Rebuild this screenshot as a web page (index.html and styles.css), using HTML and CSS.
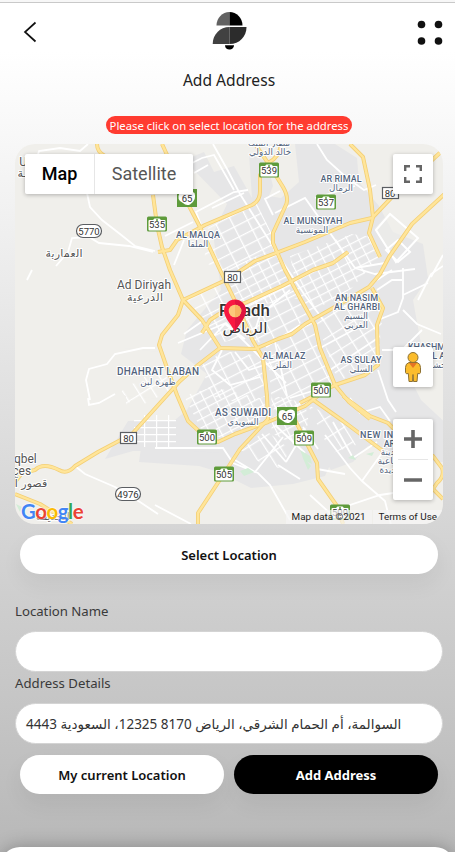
FILE: index.html
```html
<!DOCTYPE html>
<html lang="en">
<head>
<meta charset="utf-8">
<title>Add Address</title>
<link rel="stylesheet" href="styles.css">
</head>
<body>
<div class="screen">
  <header class="topbar">
    <svg class="back" viewBox="0 0 14 22"><path d="M12.500 1.500 2 11l10.500 9.500" fill="none" stroke="#111" stroke-width="1.700"/></svg>
    <svg class="logo" viewBox="0 0 36 40">
      <path d="M4.500 14.500A13 13.500 0 0 1 17.500 1v13.500z" fill="#626262"/><path d="M17.500 1a13 13.500 0 0 1 13 13.500h-13z" fill="#000"/>
      <path d="M17.500 16v17H.7C.7 23.500 8 16 17.500 16z" fill="#414141"/><path d="M17.500 16h17c0 9.500-7 17-17 17z" fill="#2c2c2c"/>
      <path d="M13 34.300h9c0 5.500-9 6-9 0z" fill="#000"/>
    </svg>
    <svg class="dots" viewBox="0 0 26 26"><g fill="#111"><circle cx="4.500" cy="4.500" r="3.800"/><circle cx="21.500" cy="4.500" r="3.800"/><circle cx="4.500" cy="21" r="3.800"/><circle cx="21.500" cy="21" r="3.800"/></g></svg>
  </header>
  <h1 class="title">Add Address</h1>
  <p class="notice">Please click on select location for the address</p>

  <section class="map">
    <svg class="map-art" viewBox="15 144 428 380">
      <defs>
        <pattern id="g1" width="15" height="11" patternUnits="userSpaceOnUse" patternTransform="rotate(-27)"><path d="M0 0H15M0 0V11" stroke="#fff" stroke-width="2.600"/></pattern>
        <pattern id="g2" width="10" height="8" patternUnits="userSpaceOnUse" patternTransform="rotate(-27)"><path d="M0 0H10M0 0V8" stroke="#fff" stroke-width="2.400"/></pattern>
        <pattern id="g3" width="13" height="17" patternUnits="userSpaceOnUse" patternTransform="rotate(-32)"><path d="M0 0H13M0 0V17" stroke="#fff" stroke-width="2.600"/></pattern>
        <pattern id="g4" width="12" height="7" patternUnits="userSpaceOnUse"><path d="M0 0H12M0 0V7" stroke="#fff" stroke-width="2.400"/></pattern>
        <g id="green"><rect x="-10" y="-7.500" width="20" height="15" rx="1.500" fill="#5e9b3b"/><rect x="-8.500" y="-4" width="17" height="10.500" rx="1" fill="#fff"/><path d="M-8-4h4l1.500-1.500h5L4-4h4" fill="#fff"/><circle cy="-4" r="1" fill="#5e9b3b"/></g>
        <g id="shield"><rect x="-10" y="-9" width="20" height="18" fill="#5e9b3b"/><path d="M-7.500-5 Q-4-7-1-4.500 3-8 7.500-5 10 2 3 6.500-1 8-4 5-11 2-7.500-5z" fill="#fff"/></g>
      </defs>
      <path d="M15 144h428v380H15z" fill="#f0efeb"/>
      <g fill="#e6e6e7">
        <path d="M184 160l20-8 10 20 20-6 18 32-3-44 18 8 6 24-4 10 12 2 18-16-4-38h40l22 14 2 24 20 24 14 26 30 12 5 34-15 22 8 44-8 40 8 16 28 26 26 40-50-6-30 10-20-30-40 14-10 22-32 8-42 4-32-16-20-6-60-4 2-14 46-38 20-36-26-20 6-24 34-40-8-56 14-30z"/>
        <path d="M128 421h45l24 24h24l20-18 52 2 20 30-62 12-32-18-26-2h-60l-28 8z"/>
        <path d="M320 399l40-3 38 30 10 28-40-8-15 16-22 8-22-36z"/>
      </g>
      <g fill="#f0efeb"><path d="M374 229l15-17 20 14-20 26zM125 348l34 4 10 22 12 22-6 4-50-4z" opacity=".5"/></g>
      <g>
        <path d="M208 228l48-26 15 30 3 18-50 22-20-10z" fill="url(#g1)"/>
        <path d="M224 270l52-22 24 50-60 10zM290 256l62-22 20 3 7 20-28 32-43 25-10-18z" fill="url(#g2)"/>
        <path d="M186 298l38-18 14 28 2 30-20 5-20-28zM240 302l54-22 14 38-25 18-30 8z" fill="url(#g1)"/>
        <path d="M316 320l61-32 6 22-5 50-40 22z" fill="url(#g3)"/>
        <path d="M202 365l22-14 36 5 6 40-22 8-34-8zM268 350l44-28 10 28 10 34-24 20-36 6z" fill="url(#g1)"/>
        <path d="M184 396l28-9 52 12 2 18-42 22-22-8zM275 396l30 7 4 20-14 22-24-12z" fill="url(#g2)"/>
        <path d="M134 415h38v32h-38zM156 415h20v33h-20z" fill="url(#g4)"/>
        <path d="M120 392l36-22 10 3 4 18-30 15zM126 385l24-5-24 26zM241 450l24-20 26 20-12 18-18-5zM308 405l34 16 14 24-24 8-10-18z" fill="url(#g3)"/>
        <path d="M376 230l14-16 28 24-22 24z" fill="none" stroke="#fff" stroke-width="2"/>
        <path d="M386 250l12-10 12 12-12 10z" fill="none" stroke="#fff" stroke-width="2"/>
      </g>
      <g fill="none" stroke="#fff" stroke-width="1.800">
        <path d="M37 158l2-7 21-3 20 3 8-7M87 193l3 14 12 13 18 14 15 12 20 5M56 266l12-14 4-14 17-1 10 6 30 3 24 6M27 280l5-10"/>
        <path d="M90 400l-4-20 3-11 18-5 8-10 28-6h12M88 398l1 7 10-2 16-9M75 466l10 8 30 13 25 15 18 12M155 505l36 19"/>
        <path d="M213 144l14 25 13 25 44 70 20 30 20 27M188 165l14-7 12-3 20 35M194 173l14-8M212 208l32-15M202 228l-6-16 38-20 14-2M165 236l28-14M184 240l-10 25"/>
        <path d="M317 144l10 16 20 18 17 12 12-5M280 191l-15 8 8 16M275 213l30-15 50 70 20 6 40-5M315 198l40-12M355 268l30-5"/>
        <path d="M184 334l20-14M178 343l48-20 60 60M200 350l25-26 20 15M222 350l-10 20 18 15 30-8M235 352l14 18 36-12M275 342l12 54M290 290l-30 25-8 25M300 325l-34 22M320 348l48-26M330 370l48-32M290 398l45-14"/>
        <path d="M155 448h68l10 15 25 10 12 12 20 35M235 460l20 12 28-35M262 434l24 28M275 425l30 28M286 462l12-20M278 465l22 14"/>
        <path d="M377 290l15-10 10 0M403 268v30l-5 14-20 8M403 310l14 14 24 10M403 295l25-12M382 350h20l20-20M418 300l13-26 12-8M392 270l-15 10"/>
        <path d="M325 435l25 33 12 13 23 20 6 24M333 422l20 36 24-16M362 481l20-28M317 469l28 5M310 495l22 20M303 427l15 22M350 398l10 15 20-6 10 14M378 370l10 30 8 12M335 510l45-15 20-3"/>
        <path d="M443 255l-12 22"/>
      </g>
      <g fill="#d3edd7"><path d="M240 471l8-3 6 4-10 4zM300 450l10 6 2 8-8-4zM348 458l5-3 3 5zM366 454l8-2-2 4zM16 504l6 3-2 5zM302 456l9 10-3 4z"/></g>
      <g class="roads">
        <g id="highways">
          <path d="M97 144q0 8 8 12M153 195l4 30 5 22 8 23 13 30 19 20 18 28 35 1 23-10 14-5 13-10 42-24 22-13 11-13 9-17 23-33 38-35"/>
          <path d="M220 348l-22 17-18 16-20 22-28 31-34 18-23 14q-8 9-16 4-16-8-24 0l-13 3-7 9"/>
          <path d="M183 300l-5 15-16 20-3 10 8 23 10 27 11 26 14 13 16 8 17-8 33-12 37-16 13-10"/>
          <path d="M183 300l45-21 27-18 50-19 45-19 22-5 20-21 51-47"/>
          <path d="M162 144l6 13M187 202l13 25 20 43 17 35 16 36 10 17 4 38 1 23-13 14-15 16-13 20-29 44v11"/>
          <path d="M158 252l12-2 7-10 28-15 47-20q8-4 8-14v-16l8-12q12-6 13-19M255 144l13 19 15 24q7 12 2 20l-12 26v10l12 27 15 28 15 27 5 23 15 37 14 17 21 17"/>
          <path d="M343 396l27 20 18 7 20 20 25 13 9 12q3 8-5 15l-4 6 10 10"/>
          <path d="M202 333l8-13q17-12 35-17l37-17 31-16 20-7 15-11M350 144l13 13 7 33 3 27-4 16 11 24M312 399l31 22 40 30"/>
          <path d="M300 403l35-18 30-10 13-10-1-40 6-17-11-20M285 420l10 0 7 14 15 29 1 16 19 27 6 18M15 494l25 10 32 20"/>
        </g>
      </g>
      <use href="#highways" class="road-fill"/>
      <g class="district">
        <text x="198" y="237.500" textLength="44">AL MALQA</text><text x="341" y="181.500" textLength="41">AR RIMAL</text><text x="313" y="223.500" textLength="59">AL MUNSIYAH</text><text x="356.500" y="300.500" textLength="43">AN NASIM</text><text x="357" y="309.500" textLength="46">AL GHARBI</text><text x="284" y="358.500" textLength="43">AL MALAZ</text><text x="361" y="362.500" textLength="41">AS SULAY</text><text x="158" y="374.500" class="wide" textLength="82">DHAHRAT LABAN</text><text x="243" y="415.500" class="wide" textLength="56">AS SUWAIDI</text><text x="426.500" y="349.500" textLength="37">KHASHM</text><text x="439" y="358.500">AL AN</text><text x="386" y="437.500" textLength="52">NEW INDUS</text><text x="395" y="446.500">AREA</text>
        <g class="ar"><text x="198" y="246.500">الملقا</text><text x="341" y="190.500">الرمال</text><text x="312" y="232.500">المونسية</text><text x="356" y="318.500">النسيم</text><text x="356" y="327.500">الغربي</text><text x="283" y="367.500">الملز</text><text x="361" y="371.500">السلي</text><text x="158" y="385">ظهرة لبن</text><text x="243" y="425">السويدي</text><text x="269" y="146">مطار الملك</text><text x="270" y="154.500">خالد الدولي</text><text x="393" y="455">المدينة</text><text x="393" y="464">الصناعية</text><text x="393" y="473">الجديدة</text><text x="437" y="368">خشم</text></g>
      </g>
      <g class="badges">
        <use href="#shield" x="187" y="198"/><use href="#green" x="157" y="224"/><use href="#green" x="269" y="170"/><use href="#green" x="326" y="202"/><use href="#green" x="321" y="390"/><use href="#green" x="207" y="437"/><use href="#shield" x="287" y="416"/><use href="#green" x="304" y="438"/><use href="#green" x="224" y="474"/><use href="#green" x="340" y="512"/>
        <g fill="#fff" stroke="#5b5e62" stroke-width="1.200"><rect x="76.500" y="224.500" width="25" height="13" rx="6.500"/><rect x="115.500" y="487.500" width="25" height="13" rx="6.500"/><rect x="224.500" y="271.500" width="16" height="11"/><rect x="120.500" y="432.500" width="16" height="11"/><rect x="382.500" y="187.500" width="16" height="11"/></g>
        <g class="num">
          <text x="187" y="202">65</text><text x="157" y="227.500">535</text><text x="269" y="173.500">539</text><text x="326" y="205.500">537</text><text x="321" y="394">500</text><text x="207" y="441">500</text><text x="287" y="420">65</text><text x="304" y="442">509</text><text x="224" y="478">505</text><text x="340" y="516">509</text><text x="89" y="234.500">5770</text><text x="128" y="497.500">4976</text><text x="232.500" y="280.500">80</text><text x="128.500" y="441.500">80</text><text x="390" y="196.500">80</text>
        </g>
      </g>
      <g class="town">
        <text x="144" y="289" textLength="54">Ad Diriyah</text><text x="145" y="301" class="town-ar" textLength="36">الدرعية</text><text x="64" y="257" class="town-ar" textLength="37">العمارية</text><text x="22" y="463">uqbel</text><text x="17" y="475">laces</text><text x="27" y="487" class="town-ar">قصور آل</text><text x="26" y="166">Uy</text><text x="22" y="177" class="town-ar">ـة</text><text x="53" y="520" class="town-ar">الحديقة</text>
      </g>
      <text x="244.500" y="316" class="city" textLength="51" lengthAdjust="spacingAndGlyphs">Riyadh</text><text x="245" y="333" class="city city-ar" textLength="45" lengthAdjust="spacingAndGlyphs">الرياض</text>
      <path d="M235 332c-3-7-11-14-11-21.500a11 11 0 0 1 22 0c0 7.500-8 14.500-11 21.500z" fill="#f91942"/><path d="M235 300a11 11 0 0 1 11 10.500c0 7.500-8 14.500-11 21.500z" fill="#e0143f"/><circle cx="235" cy="311" r="6.300" fill="#fdc77b"/><path d="M235 304.700a6.300 6.300 0 0 1 0 12.600z" fill="#f8b462"/>
    </svg>
    <div class="map-type"><span class="type active">Map</span><span class="type">Satellite</span></div>
    <div class="control full"><svg viewBox="0 0 18 18"><path d="M1.200 6V1.200H6M12 1.200h4.800V6M16.800 12v4.800H12M6 16.800H1.200V12" fill="none" stroke="#666" stroke-width="2.400"/></svg></div>
    <div class="control person"><svg viewBox="0 0 20 32"><path d="M6 11.500h8q3.500 1 3.500 5v5q-.5 2-2.800 1l-.7 8h-3.500l-.5-7-.5 7H6l-.7-8q-2.300 1-2.800-1v-5q0-4 3.500-5z" fill="#fbbc2c" stroke="#8d7133"/><path d="M6 12l4 5 4-5z" fill="#e57424"/><circle cx="10" cy="6.500" r="5" fill="#fbbc2c" stroke="#8d7133"/></svg></div>
    <div class="zoom"><svg viewBox="0 0 18 18"><path d="M9 0v18M0 9h18" stroke="#666" stroke-width="3.600"/></svg><i></i><svg viewBox="0 0 18 18"><path d="M0 9h18" stroke="#666" stroke-width="3.600"/></svg></div>
    <div class="google"><b class="blue">G</b><b class="red">o</b><b class="yellow">o</b><b class="blue">g</b><b class="green">l</b><b class="red">e</b></div>
    <div class="legal"><span>Map data ©2021</span><span>Terms of Use</span></div>
  </section>

  <button class="button select">Select Location</button>
  <label class="label first" for="name">Location Name</label>
  <input class="field" id="name" type="text">
  <label class="label second">Address Details</label>
  <div class="field details" dir="ltr">4443 <bdi dir="rtl">السوالمة، أم الحمام الشرقي، الرياض 8170 12325، السعودية</bdi></div>
  <div class="actions"><button class="button">My current Location</button><button class="button dark">Add Address</button></div>
  <footer class="sheet"></footer>
</div>
</body>
</html>
```
FILE: styles.css
```css
* { box-sizing: border-box; }
body { margin: 0; font-family: "Noto Sans", "DejaVu Sans", sans-serif; color: #222; }
.screen { height: 852px; overflow: hidden; display: flex; flex-direction: column; border-top: 2px solid #f7f7f7; background: linear-gradient(#fff 0, #fff 50px, #f7f7f7 143px, #d5d5d5 523px, #b8b8b8 850px); }
.topbar { height: 60px; border-top: 1px solid #c9c9c9; padding: 0 12px 0 23px; display: flex; justify-content: space-between; align-items: flex-start; flex: none; }
.back { width: 14px; height: 22px; margin-top: 18px; }
.logo { width: 36px; height: 40px; margin: 8px 0 0 6px; }
.dots { width: 26px; height: 26px; margin-top: 17px; }
.title { margin: 7px 0 0 3px; height: 22px; line-height: 22px; font-size: 15.600px; font-weight: 400; text-align: center; }
.notice { align-self: center; margin: 25px 0 0 3px; width: 246px; height: 18px; border-radius: 9px; background: #ff3b30; color: #fff; font-size: 11.300px; line-height: 19px; text-align: center; white-space: nowrap; }
.map { flex: none; position: relative; margin: 10px 12px 0 15px; height: 380px; border-radius: 20px; overflow: hidden; font-family: Roboto, sans-serif; }
.map-art { display: block; width: 428px; height: 380px; }
.roads { fill: none; stroke: #f3cf76; stroke-width: 4; stroke-linejoin: round; }
.road-fill { fill: none; stroke: #ffe599; stroke-width: 2.400; stroke-linejoin: round; }
.map-art text { font-family: Roboto, "DejaVu Sans", sans-serif; text-anchor: middle; paint-order: stroke; stroke: #fff; stroke-width: 2px; stroke-linejoin: round; }
.map-art .num text { font-size: 9.500px; fill: #333; stroke: none; }
.district text { font-size: 9px; font-weight: 500; fill: #53647d; }
.district .wide { font-size: 10px; }
.district .ar text { font-size: 8.800px; font-weight: 400; font-family: "DejaVu Sans", sans-serif; }
.town text { font-size: 12px; fill: #555; }
.map-art .town-ar { font-family: "DejaVu Sans", sans-serif; font-size: 11px; }
.map-art .city { font-size: 17px; font-weight: 500; fill: #333; }
.map-art .city-ar { font-family: "DejaVu Sans", sans-serif; font-weight: 400; font-size: 15px; }
.map-type { position: absolute; left: 10px; top: 10px; display: flex; gap: 1px; height: 40px; line-height: 40px; font-size: 18px; color: #565656; box-shadow: 0 1px 4px #0004; background: #e6e6e6; border-radius: 2px; }
.type { background: #fff; width: 98px; text-align: center; border-radius: 0 2px 2px 0; }
.type.active { width: 69px; color: #000; font-weight: 500; border-radius: 2px 0 0 2px; }
.control, .zoom { position: absolute; right: 10px; width: 40px; background: #fff; border-radius: 2px; box-shadow: 0 1px 4px #0004; display: flex; align-items: center; justify-content: center; }
.control { height: 40px; }
.control svg, .zoom svg { width: 18px; height: 18px; }
.full { top: 10px; }
.person { top: 203px; }
.control.person svg { width: 20px; height: 32px; }
.zoom { top: 275px; height: 81px; flex-direction: column; gap: 11px; }
.zoom i { width: 30px; height: 1px; background: #e6e6e6; }
.google { position: absolute; left: 6px; bottom: 0; font: 700 20.500px/26px Lato, sans-serif; letter-spacing: -.5px; text-shadow: 0 0 2px #fff, 0 0 2px #fff; }
.google b { font-weight: 700; }
.blue { color: #4285f4; } .red { color: #ea4335; } .yellow { color: #fbbc05; } .green { color: #34a853; }
.legal { position: absolute; right: 0; bottom: 0; height: 14px; display: flex; font-size: 9.900px; line-height: 14px; color: #222; gap: 1px; }
.legal span { background: #f5f5f5b3; padding: 0 6px; white-space: nowrap; }
.button { font: 600 13px/40px "Noto Sans", sans-serif; height: 39px; border: 0; border-radius: 20px; padding: 0; background: #fff; color: #111; box-shadow: 0 10px 22px #0000000f; }
.select { margin: 11px 17px 0 20px; flex: none; }
.label { height: 20px; line-height: 20px; font-size: 13.200px; color: #3a3a3a; margin: 27px 15px 0; flex: none; }
.field { margin: 10px 12px 0 15px; height: 41px; flex: none; border: 1px solid #d4d4d4; border-radius: 21px; background: #fff; padding: 0 10px; }
.label.second { margin-top: 1px; }
.details { font-size: 13.500px; line-height: 41px; white-space: nowrap; color: #333; }
.actions { display: grid; grid-template-columns: 1fr 1fr; gap: 10px; margin: 11px 17px 0 20px; flex: none; }
.dark { background: #000; color: #fff; font-weight: 700; }
.sheet { margin-top: 53px; height: 40px; flex: none; background: #fff; border-radius: 20px 20px 0 0; box-shadow: 0 0 18px #0004; }
```
